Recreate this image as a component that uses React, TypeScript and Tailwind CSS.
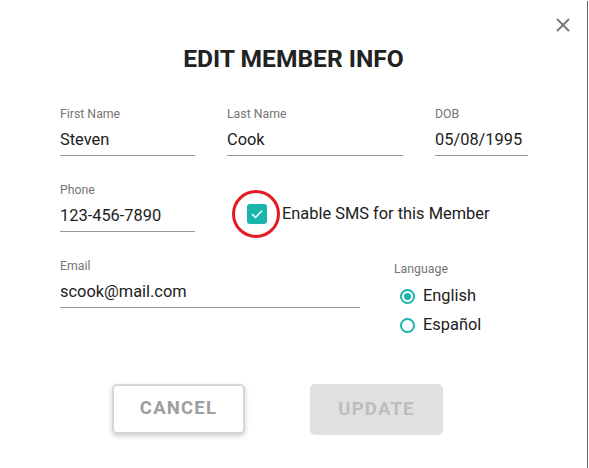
import React from 'react';

const teal = 'bg-[#19b5ad]';

const Field = ({ label, value, width }: { label: string; value: string; width: string }) => (
  <div className={width}>
    <div className="text-[12.3px] leading-[14px] text-[#757575]">{label}</div>
    <div className="mt-[7px] h-[28px] border-b border-[#9a9a9a] pb-[4px] text-[16.4px] leading-[24px] text-[#212121]">
      {value}
    </div>
  </div>
);

const Radio = ({ label, checked }: { label: string; checked?: boolean }) => (
  <div className="flex h-[29px] items-center">
    <span className="flex h-[15px] w-[15px] items-center justify-center rounded-full border-2 border-[#19b5ad]">
      {checked && <span className={`h-[7px] w-[7px] rounded-full ${teal}`} />}
    </span>
    <span className="ml-[8px] text-[16.4px] text-[#212121]">{label}</span>
  </div>
);

export default function App() {
  return (
    <div className="flex h-[468px] w-[589px] bg-white" style={{ fontFamily: 'Roboto, "Liberation Sans", sans-serif' }}>
      <div className="relative h-full w-[587px]">
        <button className="absolute right-[17px] top-[18px] text-[#757575]">
          <svg width="14" height="14" viewBox="0 0 14 14" stroke="currentColor" strokeWidth="1.8">
            <line x1="1" y1="1" x2="13" y2="13" />
            <line x1="13" y1="1" x2="1" y2="13" />
          </svg>
        </button>

        <h1 className="pt-[45px] text-center text-[24.6px] font-bold leading-[28px] text-[#222]">EDIT MEMBER INFO</h1>

        <div className="pl-[60px]">
          <div className="mt-[34px] flex gap-[32px]">
            <Field label="First Name" value="Steven" width="w-[135px]" />
            <Field label="Last Name" value="Cook" width="w-[176px]" />
            <Field label="DOB" value="05/08/1995" width="w-[93px]" />
          </div>

          <div className="mt-[27px] flex">
            <Field label="Phone" value="123-456-7890" width="w-[135px]" />
            <div className="relative ml-[52px] mt-[21px] flex h-[20px] items-center">
              <span className={`flex h-[20px] w-[20px] items-center justify-center rounded-[3px] ${teal}`}>
                <svg width="14" height="14" viewBox="0 0 14 14" fill="none" stroke="white" strokeWidth="1.6">
                  <polyline points="2,7.2 5.5,10.5 12,3.8" />
                </svg>
              </span>
              <span className="ml-[15px] text-[16.4px] text-[#212121]">Enable SMS for this Member</span>
              <span className="absolute left-[-15px] top-[-14px] h-[48px] w-[48px] rounded-full border-[3px] border-[#e31b23]" />
            </div>
          </div>

          <div className="mt-[27px] flex">
            <Field label="Email" value="scook@mail.com" width="w-[300px]" />
            <div className="ml-[34px] mt-[3px]">
              <div className="text-[12.3px] leading-[14px] text-[#757575]">Language</div>
              <div className="ml-[6px] mt-[6px]">
                <Radio label="English" checked />
                <Radio label="Español" />
              </div>
            </div>
          </div>
        </div>

        <div className="mt-[44px] flex pl-[112px] gap-[65px]">
          <button className="h-[50px] w-[133px] rounded-[5px] border-2 border-[#d6d6d6] bg-white text-[18.5px] font-bold tracking-[1.2px] text-[#9e9e9e] shadow-[0_2px_5px_rgba(0,0,0,0.2)]">
            CANCEL
          </button>
          <button className="h-[51px] w-[133px] rounded-[5px] bg-[#e0e0e0] text-[18.5px] font-bold tracking-[1.2px] text-[#bdbdbd]">
            UPDATE
          </button>
        </div>
      </div>
      <div className="mt-[1px] w-px bg-[#666]" />
      <div className="w-px" />
    </div>
  );
}
